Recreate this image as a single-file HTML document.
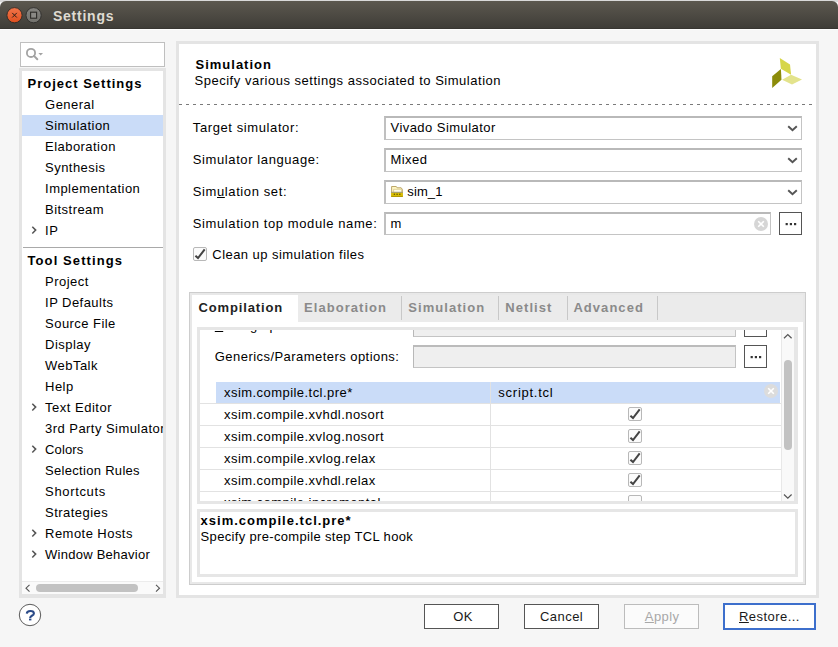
<!DOCTYPE html>
<html><head><meta charset="utf-8">
<style>
*{margin:0;padding:0;box-sizing:border-box}
html,body{width:838px;height:647px;overflow:hidden;background:#f6f6f6;font-family:"Liberation Sans",sans-serif;color:#000}
.a{position:absolute}
.t{position:absolute;white-space:nowrap;font-size:13px;line-height:16px;letter-spacing:0.45px}
.b{font-weight:bold;letter-spacing:1px}
svg{position:absolute;overflow:visible}
</style></head><body>
<div class="a" style="left:0px;top:0px;width:838px;height:2px;background:#d9d9d9"></div>
<div class="a" style="left:0px;top:1px;width:838px;height:28px;background:linear-gradient(#5c584f,#3e3c37);border-radius:6px 6px 0 0"></div>
<div class="a" style="left:0px;top:28px;width:838px;height:1px;background:#383632"></div>
<div class="a" style="left:0px;top:29px;width:838px;height:1px;background:#fdfdfd"></div>
<svg style="left:0;top:0" width="60" height="30"><defs><linearGradient id="cg" x1="0" y1="0" x2="0" y2="1"><stop offset="0" stop-color="#f2754a"/><stop offset="1" stop-color="#e0501f"/></linearGradient><linearGradient id="mg" x1="0" y1="0" x2="0" y2="1"><stop offset="0" stop-color="#858480"/><stop offset="1" stop-color="#73726d"/></linearGradient></defs><circle cx="14.5" cy="15.2" r="7.6" fill="url(#cg)" stroke="#2e2a26" stroke-width="0.9"/><path d="M12.2 12.9L16.8 17.5M16.8 12.9L12.2 17.5" stroke="#2a1e18" stroke-width="1"/><circle cx="33.6" cy="15.2" r="7.6" fill="url(#mg)" stroke="#2e2d2a" stroke-width="0.9"/><rect x="30.6" y="12.2" width="6" height="6" fill="#8a8985" stroke="#2c2b28" stroke-width="1.1"/></svg>
<div class="t b" style="left:53px;top:7.8px;color:#dfdbd2;font-size:14px;letter-spacing:0.75px">Settings</div>
<div class="a" style="left:20px;top:42px;width:145px;height:25px;background:#fff;border:1px solid #bfbfbf"></div>
<svg style="left:20px;top:42px" width="30" height="25"><circle cx="11" cy="10.9" r="4.1" fill="none" stroke="#a3a3a3" stroke-width="1.8"/><path d="M14 13.9L17.3 17.2" stroke="#a3a3a3" stroke-width="2" stroke-linecap="round"/><path d="M18.4 11.1h4.6l-2.3 2.5z" fill="#a3a3a3"/></svg>
<div class="a" style="left:19px;top:68px;width:147px;height:530px;background:#e4e4e4"></div>
<div class="a" style="left:22px;top:71px;width:141px;height:523px;background:#fff"></div>
<div class="a" style="left:22px;top:115px;width:141px;height:21px;background:#cadcf8"></div>
<div class="t b" style="left:27.5px;top:76.3px;">Project Settings</div>
<div class="t " style="left:45.1px;top:97.1px;">General</div>
<div class="t " style="left:45.1px;top:118.1px;">Simulation</div>
<div class="t " style="left:45.1px;top:139.1px;">Elaboration</div>
<div class="t " style="left:45.1px;top:160.1px;">Synthesis</div>
<div class="t " style="left:45.1px;top:181.1px;">Implementation</div>
<div class="t " style="left:45.1px;top:202.1px;">Bitstream</div>
<div class="t " style="left:45.1px;top:223.1px;">IP</div>
<div class="a" style="left:23px;top:247px;width:140px;height:1px;background:#a9a9a9"></div>
<div class="t b" style="left:27.5px;top:253.3px;letter-spacing:1.1px">Tool Settings</div>
<div class="t " style="left:45.1px;top:274.3px;">Project</div>
<div class="t " style="left:45.1px;top:295.3px;">IP Defaults</div>
<div class="t " style="left:45.1px;top:316.3px;">Source File</div>
<div class="t " style="left:45.1px;top:337.3px;">Display</div>
<div class="t " style="left:45.1px;top:358.3px;">WebTalk</div>
<div class="t " style="left:45.1px;top:379.3px;">Help</div>
<div class="t " style="left:45.1px;top:400.3px;letter-spacing:0.5px">Text Editor</div>
<div class="t " style="left:45.1px;top:421.3px;">3rd Party Simulator</div>
<div class="t " style="left:45.1px;top:442.3px;letter-spacing:0.1px">Colors</div>
<div class="t " style="left:45.1px;top:463.3px;letter-spacing:0.3px">Selection Rules</div>
<div class="t " style="left:45.1px;top:484.3px;letter-spacing:0.65px">Shortcuts</div>
<div class="t " style="left:45.1px;top:505.3px;">Strategies</div>
<div class="t " style="left:45.1px;top:526.3px;">Remote Hosts</div>
<div class="t " style="left:45.1px;top:547.3px;letter-spacing:0.25px">Window Behavior</div>
<svg style="left:30.8px;top:225.5px" width="6" height="9"><path d="M1.3 0.7L4.7 4.1L1.3 7.5" fill="none" stroke="#555" stroke-width="1.5"/></svg>
<svg style="left:30.8px;top:402.5px" width="6" height="9"><path d="M1.3 0.7L4.7 4.1L1.3 7.5" fill="none" stroke="#555" stroke-width="1.5"/></svg>
<svg style="left:30.8px;top:444.5px" width="6" height="9"><path d="M1.3 0.7L4.7 4.1L1.3 7.5" fill="none" stroke="#555" stroke-width="1.5"/></svg>
<svg style="left:30.8px;top:528.5px" width="6" height="9"><path d="M1.3 0.7L4.7 4.1L1.3 7.5" fill="none" stroke="#555" stroke-width="1.5"/></svg>
<svg style="left:30.8px;top:549.5px" width="6" height="9"><path d="M1.3 0.7L4.7 4.1L1.3 7.5" fill="none" stroke="#555" stroke-width="1.5"/></svg>
<div class="a" style="left:22px;top:581px;width:141px;height:13px;background:#fafafa;border-top:1px solid #ececec"></div>
<div class="a" style="left:36px;top:584px;width:102px;height:8px;background:#c2c2c2;border-radius:4px"></div>
<svg style="left:25px;top:584px" width="6" height="9"><path d="M4.5 0.8L1 4.2L4.5 7.6" fill="none" stroke="#555" stroke-width="1.1"/></svg>
<svg style="left:154.5px;top:584px" width="6" height="9"><path d="M1 0.8L4.5 4.2L1 7.6" fill="none" stroke="#555" stroke-width="1.1"/></svg>
<div class="a" style="left:163px;top:71px;width:3px;height:523px;background:#e4e4e4"></div>
<div class="a" style="left:176px;top:41px;width:643px;height:557px;background:#e4e4e4"></div>
<div class="a" style="left:179px;top:44px;width:637px;height:551px;background:#fff"></div>
<div class="t b" style="left:195.5px;top:57.0px;">Simulation</div>
<div class="t " style="left:194.5px;top:73.0px;letter-spacing:0.52px">Specify various settings associated to Simulation</div>
<svg style="left:0;top:0" width="838" height="100"><path d="M779.8 58.1L790 64.6L791.1 74.8L780.9 68.7Z" fill="#d6d64a"/><path d="M780.9 69L781.5 79.8L772.2 88L772.2 76.3Z" fill="#8c8c0a"/><path d="M782.1 79.8L791.1 74.8L802 79.5L792 84.4Z" fill="#e3e38c"/></svg>
<div class="a" style="left:179px;top:104px;width:634px;height:1px;background:repeating-linear-gradient(90deg,#7a7a7a 0 3px,transparent 3px 7px)"></div>
<div class="t " style="left:192.8px;top:119.5px;letter-spacing:0.6px">Target simulator:</div>
<div class="t " style="left:192.8px;top:151.5px;letter-spacing:0.6px">Simulator language:</div>
<div class="t " style="left:192.8px;top:183.5px;letter-spacing:0.6px">Sim<u>u</u>lation set:</div>
<div class="t " style="left:192.8px;top:215.5px;letter-spacing:0.6px">Simulation top module name:</div>
<div class="a" style="left:384px;top:116px;width:418px;height:24px;background:#fff;border:1px solid #c4c4c4;border-top:2px solid #b9b9b9;border-left:2px solid #c0c0c0"></div>
<svg style="left:787px;top:125px" width="12" height="8"><path d="M1.2 1.2L5.5 5.3L9.8 1.2" fill="none" stroke="#555" stroke-width="1.9"/></svg>
<div class="a" style="left:384px;top:148px;width:418px;height:24px;background:#fff;border:1px solid #c4c4c4;border-top:2px solid #b9b9b9;border-left:2px solid #c0c0c0"></div>
<svg style="left:787px;top:157px" width="12" height="8"><path d="M1.2 1.2L5.5 5.3L9.8 1.2" fill="none" stroke="#555" stroke-width="1.9"/></svg>
<div class="a" style="left:384px;top:180px;width:418px;height:24px;background:#fff;border:1px solid #c4c4c4;border-top:2px solid #b9b9b9;border-left:2px solid #c0c0c0"></div>
<svg style="left:787px;top:189px" width="12" height="8"><path d="M1.2 1.2L5.5 5.3L9.8 1.2" fill="none" stroke="#555" stroke-width="1.9"/></svg>
<div class="t " style="left:390.5px;top:120.3px;">Vivado Simulator</div>
<div class="t " style="left:390.5px;top:152.3px;">Mixed</div>
<svg style="left:388px;top:182px" width="18" height="18"><path d="M3.6 14.5V4.5H8.3L9.1 5.8H13.2L14.3 7.3V14.5Z" fill="#fff6c4" stroke="#b59e5c" stroke-width="0.9"/><path d="M5.6 7.3H13.6V10.5H5.6Z" fill="#fffbe6" stroke="#cdb970" stroke-width="0.6"/><rect x="3.2" y="9.8" width="11.6" height="1" fill="#8d8c82"/><rect x="3.2" y="10.8" width="11.6" height="4" fill="#dcc000"/><rect x="3.2" y="13.9" width="11.6" height="0.9" fill="#a88f00"/><rect x="5.7" y="11.6" width="1.4" height="1.4" fill="#6f6200"/><rect x="8.4" y="11.6" width="1.4" height="1.4" fill="#6f6200"/><rect x="11.1" y="11.6" width="1.4" height="1.4" fill="#6f6200"/></svg>
<div class="t " style="left:407.3px;top:184.3px;letter-spacing:0.1px">sim_1</div>
<div class="a" style="left:384px;top:212px;width:387px;height:23px;background:#fff;border:1px solid #c4c4c4;border-top:2px solid #b9b9b9;border-left:2px solid #c0c0c0"></div>
<div class="t " style="left:390.5px;top:216.3px;">m</div>
<svg style="left:753px;top:216px" width="16" height="16"><circle cx="8" cy="8" r="7" fill="#d6d6d6"/><path d="M5.2 5.2L10.8 10.8M10.8 5.2L5.2 10.8" stroke="#fff" stroke-width="1.6"/></svg>
<div class="a" style="left:779px;top:212px;width:23px;height:23px;background:#fff;border:1px solid #555"></div>
<svg style="left:779px;top:212px" width="23" height="23"><rect x="6.6" y="11" width="2.2" height="2.2" fill="#333"/><rect x="10.8" y="11" width="2.2" height="2.2" fill="#333"/><rect x="15" y="11" width="2.2" height="2.2" fill="#333"/></svg>
<div class="a" style="left:193px;top:247px;width:14px;height:14px;background:#fbfbfb;border:1px solid #b8b8b8;border-radius:2px"></div>
<svg style="left:193px;top:247px" width="14" height="14"><path d="M2.4 8.7L5 11.1L11.7 2.4" fill="none" stroke="#444" stroke-width="2"/></svg>
<div class="t " style="left:212.3px;top:246.6px;">Clean up simulation files</div>
<div class="a" style="left:189px;top:292px;width:617px;height:293px;background:#fff;border:1px solid #cdcdcd;box-shadow:inset 0 0 0 2px #e8e8e8"></div>
<div class="a" style="left:192px;top:295px;width:611px;height:27px;background:#ebebeb"></div>
<div class="a" style="left:192px;top:295px;width:106px;height:27px;background:#fff"></div>
<div class="a" style="left:401px;top:296px;width:1px;height:24px;background:#c8c8c8"></div>
<div class="a" style="left:498px;top:296px;width:1px;height:24px;background:#c8c8c8"></div>
<div class="a" style="left:567px;top:296px;width:1px;height:24px;background:#c8c8c8"></div>
<div class="a" style="left:657px;top:296px;width:1px;height:24px;background:#c8c8c8"></div>
<div class="t b" style="left:198.6px;top:300.1px;color:#222;letter-spacing:0.85px">Compilation</div>
<div class="t b" style="left:304.0px;top:300.1px;color:#8a8a8a;letter-spacing:1.05px">Elaboration</div>
<div class="t b" style="left:408.3px;top:300.1px;color:#8a8a8a;letter-spacing:1.05px">Simulation</div>
<div class="t b" style="left:505.3px;top:300.1px;color:#8a8a8a;letter-spacing:1.05px">Netlist</div>
<div class="t b" style="left:573.4000000000001px;top:300.1px;color:#8a8a8a;letter-spacing:1.05px">Advanced</div>
<div class="a" style="left:197px;top:327px;width:601px;height:177px;background:#e6e6e6"></div>
<div class="a" style="left:200px;top:330px;width:594px;height:171px;background:#fff"></div>
<div class="a" style="left:200px;top:330px;width:581px;height:171px;overflow:hidden"><div class="t " style="left:14.800000000000011px;top:-12.2px;"><u>V</u>erilog options:</div>
<div class="a" style="left:213px;top:-16px;width:323px;height:23px;background:#efefef;border:1px solid #c4c4c4;border-top:2px solid #bbb;border-left:1px solid #b8b8b8"></div>
<div class="a" style="left:544px;top:-16px;width:23px;height:23px;background:#fff;border:1px solid #555"></div>
<div class="t " style="left:14.800000000000011px;top:18.8px;">Generics/Parameters options:</div>
<div class="a" style="left:213px;top:15px;width:323px;height:23px;background:#efefef;border:1px solid #c4c4c4;border-top:2px solid #bbb;border-left:1px solid #b8b8b8"></div>
<div class="a" style="left:544px;top:15px;width:23px;height:23px;background:#fff;border:1px solid #555"></div>
<svg style="left:544px;top:15px" width="24" height="23"><rect x="6.6" y="11" width="2.2" height="2.2" fill="#333"/><rect x="10.8" y="11" width="2.2" height="2.2" fill="#333"/><rect x="15" y="11" width="2.2" height="2.2" fill="#333"/></svg>
<div class="a" style="left:16px;top:52px;width:564px;height:21px;background:#cadcf8"></div>
<div class="t " style="left:24px;top:55.3px;">xsim.compile.tcl.pre*</div>
<div class="t " style="left:24px;top:77.3px;">xsim.compile.xvhdl.nosort</div>
<div class="t " style="left:24px;top:99.3px;">xsim.compile.xvlog.nosort</div>
<div class="t " style="left:24px;top:121.3px;">xsim.compile.xvlog.relax</div>
<div class="t " style="left:24px;top:143.3px;">xsim.compile.xvhdl.relax</div>
<div class="t " style="left:24px;top:165.3px;">xsim.compile.incremental</div>
<div class="a" style="left:0px;top:73px;width:581px;height:1px;background:#e2e2e2"></div>
<div class="a" style="left:0px;top:95px;width:581px;height:1px;background:#e2e2e2"></div>
<div class="a" style="left:0px;top:117px;width:581px;height:1px;background:#e2e2e2"></div>
<div class="a" style="left:0px;top:139px;width:581px;height:1px;background:#e2e2e2"></div>
<div class="a" style="left:0px;top:161px;width:581px;height:1px;background:#e2e2e2"></div>
<div class="a" style="left:290px;top:52px;width:1px;height:120px;background:#e2e2e2"></div>
<div class="t " style="left:298.3px;top:55.3px;letter-spacing:0.75px">script.tcl</div>
<svg style="left:563px;top:53px" width="16" height="16"><circle cx="8" cy="8" r="7" fill="#dcdcdc"/><path d="M5.2 5.2L10.8 10.8M10.8 5.2L5.2 10.8" stroke="#fff" stroke-width="1.6"/></svg>
<div class="a" style="left:428px;top:77px;width:14px;height:14px;background:#fbfbfb;border:1px solid #b8b8b8;border-radius:2px"></div>
<svg style="left:428px;top:77px" width="14" height="14"><path d="M2.4 8.7L5 11.1L11.7 2.4" fill="none" stroke="#444" stroke-width="2"/></svg>
<div class="a" style="left:428px;top:99px;width:14px;height:14px;background:#fbfbfb;border:1px solid #b8b8b8;border-radius:2px"></div>
<svg style="left:428px;top:99px" width="14" height="14"><path d="M2.4 8.7L5 11.1L11.7 2.4" fill="none" stroke="#444" stroke-width="2"/></svg>
<div class="a" style="left:428px;top:121px;width:14px;height:14px;background:#fbfbfb;border:1px solid #b8b8b8;border-radius:2px"></div>
<svg style="left:428px;top:121px" width="14" height="14"><path d="M2.4 8.7L5 11.1L11.7 2.4" fill="none" stroke="#444" stroke-width="2"/></svg>
<div class="a" style="left:428px;top:143px;width:14px;height:14px;background:#fbfbfb;border:1px solid #b8b8b8;border-radius:2px"></div>
<svg style="left:428px;top:143px" width="14" height="14"><path d="M2.4 8.7L5 11.1L11.7 2.4" fill="none" stroke="#444" stroke-width="2"/></svg>
<div class="a" style="left:428px;top:165px;width:14px;height:14px;background:#fbfbfb;border:1px solid #b8b8b8;border-radius:2px"></div>
</div>
<div class="a" style="left:781px;top:330px;width:13px;height:171px;background:#f9f9f9;border-left:1px solid #e8e8e8"></div>
<div class="a" style="left:784px;top:360px;width:8px;height:90px;background:#c2c2c2;border-radius:4px"></div>
<svg style="left:783px;top:333px" width="10" height="7"><path d="M1 5.2L4.8 1.5L8.6 5.2" fill="none" stroke="#555" stroke-width="1.2"/></svg>
<svg style="left:783px;top:493px" width="10" height="7"><path d="M1 1.5L4.8 5.2L8.6 1.5" fill="none" stroke="#555" stroke-width="1.2"/></svg>
<div class="a" style="left:197px;top:509px;width:601px;height:68px;background:#e6e6e6"></div>
<div class="a" style="left:200px;top:512px;width:595px;height:62px;background:#fff"></div>
<div class="t b" style="left:200.6px;top:513.3px;">xsim.compile.tcl.pre*</div>
<div class="t " style="left:200.6px;top:529.1px;letter-spacing:0.33px">Specify pre-compile step TCL hook</div>
<svg style="left:0;top:0" width="60" height="640"><circle cx="30" cy="615" r="10.7" fill="#fff" stroke="#5a5a5a" stroke-width="1"/><path transform="translate(0.2,0.7)" d="M26.6 612.9C26.7 611 28.3 610.3 30.1 610.3C32.3 610.3 33.7 611.3 33.7 612.7C33.7 614.2 32.3 614.7 31.1 615.4C30.3 615.9 30 616.4 30 617.3" fill="none" stroke="#2a4a88" stroke-width="2.1"/><rect x="29" y="618.6" width="2.4" height="1.8" fill="#2a4a88"/></svg>
<div class="a" style="left:424px;top:604px;width:75px;height:25px;border:1px solid #555;background:#fff"></div>
<div class="t " style="left:453.2px;top:609.3px;color:#1a1a1a">OK</div>
<div class="a" style="left:524px;top:604px;width:75px;height:25px;border:1px solid #555;background:#fff"></div>
<div class="t " style="left:540px;top:609.3px;color:#1a1a1a">Cancel</div>
<div class="a" style="left:624px;top:604px;width:75px;height:25px;border:1px solid #bcbcbc;background:#fbfbfb"></div>
<div class="t " style="left:644.8px;top:609.3px;color:#a8a8a8"><u>A</u>pply</div>
<div class="a" style="left:723px;top:603px;width:93px;height:27px;border:2px solid #3d6fcc;background:#fff"></div>
<div class="t " style="left:739px;top:609.3px;color:#1a1a1a"><u>R</u>estore...</div>
</body></html>
